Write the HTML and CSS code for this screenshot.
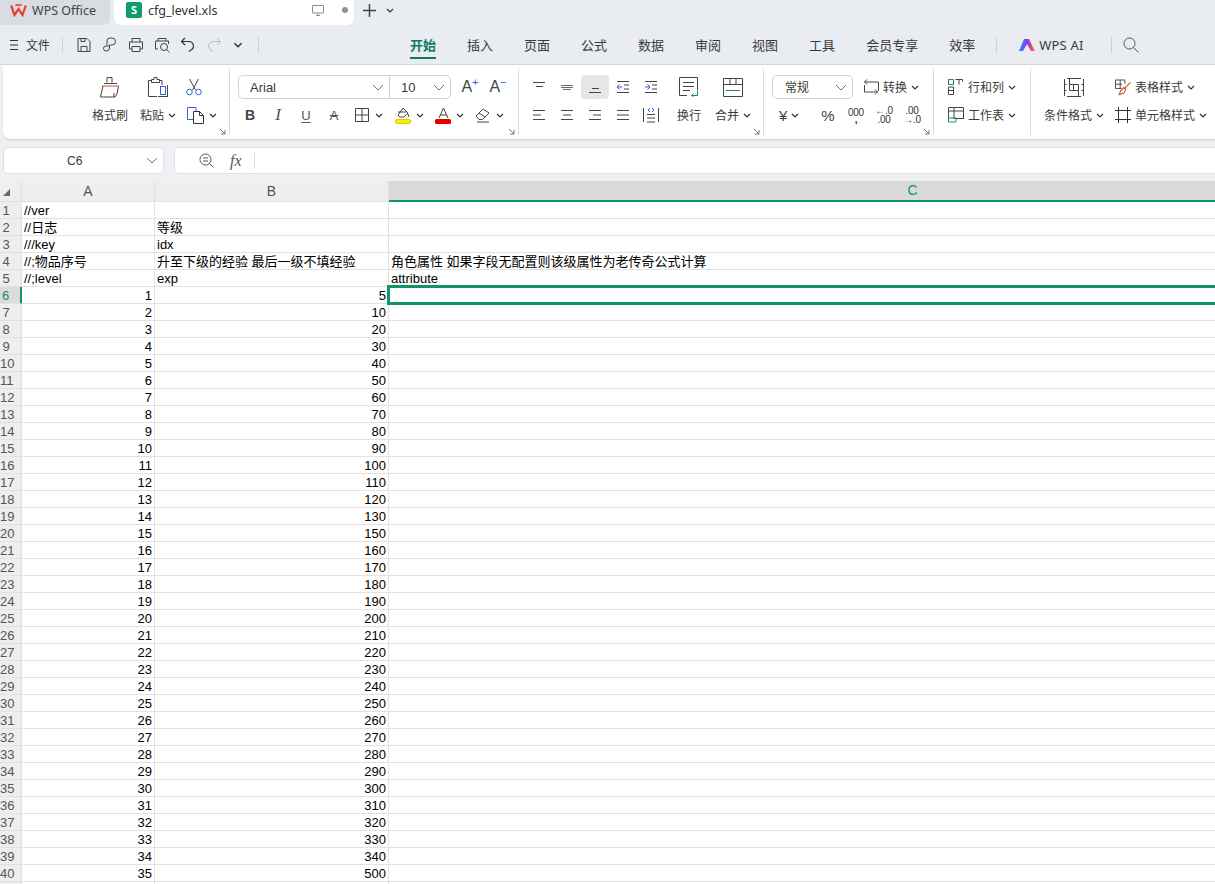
FILE: index.html
```html
<!DOCTYPE html>
<html lang="en">
<head>
    <meta charset="utf-8">
    <title>cfg_level.xls - WPS Office</title>
    <link rel="stylesheet" href="styles.css">
</head>
<body>
    <svg class="defs" width="0" height="0">
        <symbol id="chev" viewBox="0 0 8 5"><path d="M1 1l3 3 3-3" fill="none" stroke="#333" stroke-width="1.2"/></symbol>
        <symbol id="chevbig" viewBox="0 0 12 7"><path d="M1 1l5 5 5-5" fill="none" stroke="#777" stroke-width="1"/></symbol>
        <symbol id="launch" viewBox="0 0 7 7"><path d="M1 1l5 5M6 2v4H2" fill="none" stroke="#777" stroke-width="1"/></symbol>
    </svg>

    <!-- title bar -->
    <div class="tabbar">
        <div class="apptab">
            <svg width="17" height="13" viewBox="0 0 17 13"><path d="M1.200 1.500l3.300 9.500 4-6 4 6 3.300-9.500" fill="none" stroke="#ea3a2c" stroke-width="2.200"/><path d="M5.500 1h6" stroke="#ea3a2c" stroke-width="1.600"/></svg>
            <span>WPS Office</span>
        </div>
        <div class="filetab">
            <span class="sheeticon">S</span>
            <span class="filename">cfg_level.xls</span>
            <svg class="monitor" width="14" height="13" viewBox="0 0 14 13"><path d="M1.500 1.500h11v7.500h-11zM5 11.500h4M7 9v2.500" fill="none" stroke="#8b8f94"/></svg>
            <span class="dot"></span>
        </div>
        <svg class="plus" width="15" height="15" viewBox="0 0 15 15"><path d="M7.500 1v13M1 7.500h13" stroke="#444" stroke-width="1.500"/></svg>
        <svg class="tabchev" width="8" height="5"><use href="#chev"/></svg>
    </div>

    <!-- quick access + menu -->
    <div class="menubar">
        <div class="quick">
            <svg class="hamb" width="8" height="10" viewBox="0 0 8 10"><path d="M0 .500h8M0 5h8M0 9.500h8" stroke="#333"/></svg>
            <span class="filemenu">文件</span>
            <span class="qsep"></span>
            <svg class="q" width="16" height="16" viewBox="0 0 16 16"><path d="M2 1.500h9l3 3v10H2zM5 14.500v-5h6v5M5 1.500v3h4v-3" fill="none" stroke="#444"/></svg>
            <svg class="q" width="16" height="16" viewBox="0 0 16 16"><path d="M5 8V4a3 3 0 0 1 3-3h2a3 3 0 0 1 0 7H7.500v3a3 3 0 0 1-3 3H4a2.500 2.500 0 0 1 0-5h3" fill="none" stroke="#444"/></svg>
            <svg class="q" width="16" height="16" viewBox="0 0 16 16"><path d="M4 5V1.500h8V5M4 12H1.500V5h13v7H12M4 9.500h8v5H4z" fill="none" stroke="#444"/></svg>
            <svg class="q" width="16" height="16" viewBox="0 0 16 16"><path d="M4 4V1.500h8V4M4 12H1.500V4h13v3M6 12h0" fill="none" stroke="#444"/><circle cx="10" cy="10" r="3.500" fill="#e9ecf0" stroke="#444"/><path d="M12.500 12.500l3 3" stroke="#444"/></svg>
            <svg class="q" width="16" height="16" viewBox="0 0 16 16"><path d="M5 1L1.500 4.500 5 8M2 4.500h7a4.500 4.500 0 0 1 2 8.500l-2 1.500" fill="none" stroke="#333" stroke-width="1.200"/></svg>
            <svg class="q" width="16" height="16" viewBox="0 0 16 16"><path d="M11 1l3.500 3.500L11 8M14 4.500H7a4.500 4.500 0 0 0-2 8.500l2 1.500" fill="none" stroke="#bbb"/></svg>
            <svg class="q qchev" width="10" height="6"><use href="#chev"/></svg>
            <span class="qsep qsep-end"></span>
        </div>
        <nav class="menus">
            <span class="menu active">开始</span>
            <span class="menu">插入</span>
            <span class="menu">页面</span>
            <span class="menu">公式</span>
            <span class="menu">数据</span>
            <span class="menu">审阅</span>
            <span class="menu">视图</span>
            <span class="menu">工具</span>
            <span class="menu">会员专享</span>
            <span class="menu">效率</span>
        </nav>
        <span class="msep msep-ai"></span>
        <svg class="ailogo" width="16" height="12" viewBox="0 0 16 12">
            <defs><linearGradient id="aig" x1="0" x2="1" y1="0" y2="0"><stop offset="0" stop-color="#2f8cf6"/><stop offset=".5" stop-color="#7b3df0"/><stop offset=".8" stop-color="#f0457a"/><stop offset="1" stop-color="#f58a3c"/></linearGradient></defs>
            <path d="M5 0h5l6 12h-4L8 5l-4 7H0z" fill="url(#aig)"/>
        </svg>
        <span class="aitext">WPS AI</span>
        <span class="msep msep-search"></span>
        <svg class="search" width="16" height="16" viewBox="0 0 16 16"><circle cx="6.500" cy="6.500" r="5.500" fill="none" stroke="#555"/><path d="M10.500 10.500l5 5" stroke="#555"/></svg>
    </div>

    <!-- ribbon -->
    <div class="ribbon">
        <div class="group g-clip">
            <div class="col col-painter">
                <div class="cell"><svg width="22" height="22" viewBox="0 0 22 22"><path d="M8 6.500V1.500h5v5M5 7.500h13M4 10l-2.500 11h14.500l2-3 1.500-8M15 21v-4" fill="none" stroke="#444"/><path d="M3 10h17" stroke="#c8572b"/></svg></div>
                <div class="cell label">格式刷</div>
            </div>
            <div class="col col-paste">
                <div class="cell"><svg width="22" height="22" viewBox="0 0 22 22"><path d="M4 4.500H1.500v16H10M15 9V4.500h-2.500M4.500 6.500v-3h2.500V1.500h3v2h2.500v3z" fill="none" stroke="#444"/><rect x="13.500" y="10.500" width="5" height="8" fill="#fff" stroke="#2f62d9"/><path d="M11 20.500h10M20.500 9v11.500" stroke="#444"/></svg></div>
                <div class="cell label">粘贴<svg class="dd" width="8" height="5"><use href="#chev"/></svg></div>
            </div>
            <div class="col col-cut">
                <div class="cell cut"><svg width="16" height="18" viewBox="0 0 16 18"><path d="M3.500 1l6 11M12.500 1l-6 11" fill="none" stroke="#444"/><circle cx="3.500" cy="14" r="2.800" fill="none" stroke="#2f62d9"/><circle cx="12.500" cy="14" r="2.800" fill="none" stroke="#2f62d9"/></svg></div>
                <div class="cell cut-under"><svg width="18" height="17" viewBox="0 0 18 17"><path d="M6 12.500H.500V.500H9V4" fill="none" stroke="#2f62d9"/><path d="M6.500 4.500h6l4 4v8h-10zM12.500 4.500v4h4" fill="#fff" stroke="#333"/></svg><svg class="dd" width="8" height="5"><use href="#chev"/></svg></div>
            </div>
            <svg class="launcher" width="7" height="7"><use href="#launch"/></svg>
        </div>

        <div class="group g-font">
            <div class="row">
                <div class="select font-name"><span>Arial</span><svg width="12" height="7"><use href="#chevbig"/></svg></div>
                <div class="select font-size"><span>10</span><svg width="12" height="7"><use href="#chevbig"/></svg></div>
                <div class="tool grow">A<sup class="mark">+</sup></div>
                <div class="tool grow">A<sup class="mark minus">−</sup></div>
            </div>
            <div class="row">
                <div class="tool fmt bold">B</div>
                <div class="tool fmt ital">I</div>
                <div class="tool fmt under">U</div>
                <div class="tool fmt strike">A</div>
                <div class="tooldd"><svg width="14" height="14" viewBox="0 0 14 14"><path d="M.500.500h13v13H.500zM7 .500v13M.500 7h13" fill="none" stroke="#444"/></svg><svg class="dd dd-after-grid" width="8" height="5"><use href="#chev"/></svg></div>
                <div class="tooldd"><svg width="17" height="17" viewBox="0 0 17 17"><path d="M8 1l5 5-4 4H5L3 8zM3 5h8" fill="none" stroke="#444"/><path d="M13 7l1 3" stroke="#444"/><rect x=".500" y="12.500" width="15" height="4" rx="1.500" fill="#f5f000" stroke="#d6cf00"/></svg><svg class="dd" width="8" height="5"><use href="#chev"/></svg></div>
                <div class="tooldd"><svg width="17" height="17" viewBox="0 0 17 17"><path d="M4 11L8.500 1 13 11M5.500 8h6" fill="none" stroke="#444"/><rect x="0" y="12" width="16" height="5" rx="1.500" fill="#e00000"/></svg><svg class="dd" width="8" height="5"><use href="#chev"/></svg></div>
                <div class="tooldd"><svg width="17" height="15" viewBox="0 0 17 15"><path d="M1 8l7-7 6 4-6.500 6.500H4zM4 5l6 4M2 14h12" fill="none" stroke="#444"/></svg><svg class="dd" width="8" height="5"><use href="#chev"/></svg></div>
            </div>
            <svg class="launcher" width="7" height="7"><use href="#launch"/></svg>
        </div>

        <div class="group g-align">
            <div class="aligns">
                <div class="tool"><svg width="14" height="14" viewBox="0 0 14 14"><path d="M1 2.500h12M4 6.500h7" stroke="#444"/></svg></div>
                <div class="tool"><svg width="14" height="14" viewBox="0 0 14 14"><path d="M1 5.500h12M3 9.500h8M1 7.500h12" stroke="#444" stroke-width=".8"/></svg></div>
                <div class="tool on"><svg width="14" height="14" viewBox="0 0 14 14"><path d="M4 8.500h7M1 12.500h12" stroke="#444"/></svg></div>
                <div class="tool"><svg width="14" height="14" viewBox="0 0 14 14"><path d="M1 7h5M3.500 4.500L1 7l2.500 2.500" fill="none" stroke="#2f62d9"/><path d="M1 1.500h12M1 12.500h12M8 5h5M8 9h5" stroke="#444"/></svg></div>
                <div class="tool"><svg width="14" height="14" viewBox="0 0 14 14"><path d="M1 7h5M3.500 4.500L6 7 3.500 9.500" fill="none" stroke="#2f62d9"/><path d="M1 1.500h12M1 12.500h12M8 5h5M8 9h5" stroke="#444"/></svg></div>
                <div class="tool"><svg width="14" height="14" viewBox="0 0 14 14"><path d="M1 2.500h12M1 7h8M1 11.500h12" stroke="#444"/></svg></div>
                <div class="tool"><svg width="14" height="14" viewBox="0 0 14 14"><path d="M1 2.500h12M3 7h8M1 11.500h12" stroke="#444"/></svg></div>
                <div class="tool"><svg width="14" height="14" viewBox="0 0 14 14"><path d="M1 2.500h12M5 7h8M1 11.500h12" stroke="#444"/></svg></div>
                <div class="tool"><svg width="14" height="14" viewBox="0 0 14 14"><path d="M1 2.500h12M1 7h12M1 11.500h12" stroke="#444"/></svg></div>
                <div class="tool"><svg width="16" height="16" viewBox="0 0 16 16"><path d="M.500 1v14M15.500 1v14M4 7.500h8M4 11h8M4 15h8" stroke="#444" fill="none"/><path d="M7 1L5 3l2 2M9 1l2 2-2 2" stroke="#2f62d9" fill="none"/></svg></div>
            </div>
            <div class="col col-wrap">
                <div class="cell"><svg width="20" height="20" viewBox="0 0 20 20"><path d="M8 18.500H.500V.500h18v13M4 5.500h11M4 9.500h11M4 13.500h7" fill="none" stroke="#444"/><path d="M18.500 14v4.500h-6M14.500 16.500l-2 2 2 1.500" fill="none" stroke="#1f8a5b"/></svg></div>
                <div class="cell label">换行</div>
            </div>
            <div class="col col-merge">
                <div class="cell"><svg width="20" height="19" viewBox="0 0 20 19"><path d="M.500.500h19v18H.500zM.500 6.500h19M7 .500v6M13 .500v6" fill="none" stroke="#444"/><path d="M3 12.500h14" stroke="#1f8a5b"/></svg></div>
                <div class="cell label">合并<svg class="dd" width="8" height="5"><use href="#chev"/></svg></div>
            </div>
            <svg class="launcher" width="7" height="7"><use href="#launch"/></svg>
        </div>

        <div class="group g-num">
            <div class="row">
                <div class="select num-format"><span>常规</span><svg width="12" height="7"><use href="#chevbig"/></svg></div>
                <div class="btnline convert"><svg width="16" height="16" viewBox="0 0 16 16"><path d="M1.500 3h14v9M1.500 6v7h13M4 .500L1.500 3 4 5.500M12 10.500l2.500 2.500-2.500 2.500" fill="none" stroke="#444"/></svg><span>转换</span><svg class="dd" width="8" height="5"><use href="#chev"/></svg></div>
            </div>
            <div class="row">
                <div class="tooldd yuan"><span>¥</span><svg class="dd" width="8" height="5"><use href="#chev"/></svg></div>
                <div class="tool pct">%</div>
                <div class="tool stack"><span class="sm">000</span><span class="sm comma">,</span></div>
                <div class="tool stack"><span class="sm">←.0</span><span class="sm">.00</span></div>
                <div class="tool stack"><span class="sm">.00</span><span class="sm">→.0</span></div>
            </div>
            <svg class="launcher" width="7" height="7"><use href="#launch"/></svg>
        </div>

        <div class="group g-rows">
            <div class="row btnline"><svg width="16" height="16" viewBox="0 0 16 16"><path d="M.500.500h5v5h-5z" fill="none" stroke="#1f8a5b"/><path d="M7.500.500h7v2M11 .500v5M.500 8v7.500h5V8zM.500 11.500h5" fill="none" stroke="#444"/></svg><span>行和列</span><svg class="dd" width="8" height="5"><use href="#chev"/></svg></div>
            <div class="row btnline"><svg width="16" height="16" viewBox="0 0 16 16"><path d="M.500 11V.500h15V12M.500 4h15M6 .500V12M6 11.500h9" fill="none" stroke="#444"/><path d="M.500 11v4h7l1-4z" fill="none" stroke="#1f8a5b"/></svg><span>工作表</span><svg class="dd" width="8" height="5"><use href="#chev"/></svg></div>
        </div>

        <div class="group g-style">
            <div class="col col-cond">
                <div class="cell"><svg width="20" height="19" viewBox="0 0 20 19"><path d="M.500 1v17M19.500 1v17M3 .500h14M3 18.500h14M.500 6.500h2M.500 12.500h2M17.500 6.500h2M17.500 12.500h2M5.500 6.500h9v6h-9zM5.500 .500v6M9.500 6.500v6M14.500 12.500v6" fill="none" stroke="#444"/></svg></div>
                <div class="cell label">条件格式<svg class="dd" width="8" height="5"><use href="#chev"/></svg></div>
            </div>
            <div class="stylebtns">
                <div class="row btnline"><svg width="16" height="17" viewBox="0 0 17 17"><path d="M7 9.500H.500v-9h10v4M.500 5h7M5.500.500v9" fill="none" stroke="#444"/><path d="M16.500 3l-7 7M9.500 8.500l2 2-2 4-5 1.500 1.500-4z" fill="none" stroke="#c8572b" stroke-width="1.200"/></svg><span>表格样式</span><svg class="dd" width="8" height="5"><use href="#chev"/></svg></div>
                <div class="row btnline"><svg width="16" height="16" viewBox="0 0 16 16"><path d="M0 3.500h16M0 12.500h16M3.500 0v16M12.500 0v16" fill="none" stroke="#333"/></svg><span>单元格样式</span><svg class="dd" width="8" height="5"><use href="#chev"/></svg></div>
            </div>
        </div>
    </div>

    <!-- formula bar -->
    <div class="formulabar">
        <div class="namebox"><span>C6</span><svg width="12" height="7"><use href="#chevbig"/></svg></div>
        <div class="fxbox">
            <svg width="15" height="15" viewBox="0 0 15 15"><circle cx="6.500" cy="6.500" r="5.500" fill="none" stroke="#555"/><path d="M10.500 10.500l4 4M4 5h5M4 8h5" stroke="#555"/></svg>
            <span class="fx">fx</span>
            <span class="fxsep"></span>
        </div>
    </div>

    <!-- sheet -->
    <div class="sheetwrap">
    <table class="sheet">
        <colgroup><col class="c-head"><col class="c-a"><col class="c-b"><col class="c-c"></colgroup>
        <thead>
            <tr>
                <th class="corner"><span class="tri"></span></th>
                <th class="colhead">A</th>
                <th class="colhead">B</th>
                <th class="colhead selected">C</th>
            </tr>
        </thead>
        <tbody>
            <tr><th>1</th><td>//ver</td><td></td><td></td></tr>
            <tr><th>2</th><td>//日志</td><td>等级</td><td></td></tr>
            <tr><th>3</th><td>///key</td><td>idx</td><td></td></tr>
            <tr><th>4</th><td>//;物品序号</td><td>升至下级的经验 最后一级不填经验</td><td>角色属性 如果字段无配置则该级属性为老传奇公式计算</td></tr>
            <tr><th>5</th><td>//;level</td><td>exp</td><td>attribute</td></tr>
            <tr><th class="current">6</th><td class="num">1</td><td class="num">5</td><td class="active"></td></tr>
            <tr><th>7</th><td class="num">2</td><td class="num">10</td><td></td></tr>
            <tr><th>8</th><td class="num">3</td><td class="num">20</td><td></td></tr>
            <tr><th>9</th><td class="num">4</td><td class="num">30</td><td></td></tr>
            <tr><th>10</th><td class="num">5</td><td class="num">40</td><td></td></tr>
            <tr><th>11</th><td class="num">6</td><td class="num">50</td><td></td></tr>
            <tr><th>12</th><td class="num">7</td><td class="num">60</td><td></td></tr>
            <tr><th>13</th><td class="num">8</td><td class="num">70</td><td></td></tr>
            <tr><th>14</th><td class="num">9</td><td class="num">80</td><td></td></tr>
            <tr><th>15</th><td class="num">10</td><td class="num">90</td><td></td></tr>
            <tr><th>16</th><td class="num">11</td><td class="num">100</td><td></td></tr>
            <tr><th>17</th><td class="num">12</td><td class="num">110</td><td></td></tr>
            <tr><th>18</th><td class="num">13</td><td class="num">120</td><td></td></tr>
            <tr><th>19</th><td class="num">14</td><td class="num">130</td><td></td></tr>
            <tr><th>20</th><td class="num">15</td><td class="num">150</td><td></td></tr>
            <tr><th>21</th><td class="num">16</td><td class="num">160</td><td></td></tr>
            <tr><th>22</th><td class="num">17</td><td class="num">170</td><td></td></tr>
            <tr><th>23</th><td class="num">18</td><td class="num">180</td><td></td></tr>
            <tr><th>24</th><td class="num">19</td><td class="num">190</td><td></td></tr>
            <tr><th>25</th><td class="num">20</td><td class="num">200</td><td></td></tr>
            <tr><th>26</th><td class="num">21</td><td class="num">210</td><td></td></tr>
            <tr><th>27</th><td class="num">22</td><td class="num">220</td><td></td></tr>
            <tr><th>28</th><td class="num">23</td><td class="num">230</td><td></td></tr>
            <tr><th>29</th><td class="num">24</td><td class="num">240</td><td></td></tr>
            <tr><th>30</th><td class="num">25</td><td class="num">250</td><td></td></tr>
            <tr><th>31</th><td class="num">26</td><td class="num">260</td><td></td></tr>
            <tr><th>32</th><td class="num">27</td><td class="num">270</td><td></td></tr>
            <tr><th>33</th><td class="num">28</td><td class="num">280</td><td></td></tr>
            <tr><th>34</th><td class="num">29</td><td class="num">290</td><td></td></tr>
            <tr><th>35</th><td class="num">30</td><td class="num">300</td><td></td></tr>
            <tr><th>36</th><td class="num">31</td><td class="num">310</td><td></td></tr>
            <tr><th>37</th><td class="num">32</td><td class="num">320</td><td></td></tr>
            <tr><th>38</th><td class="num">33</td><td class="num">330</td><td></td></tr>
            <tr><th>39</th><td class="num">34</td><td class="num">340</td><td></td></tr>
            <tr><th>40</th><td class="num">35</td><td class="num">500</td><td></td></tr>
            <tr><th></th><td></td><td></td><td></td></tr>
        </tbody>
    </table>
    </div>
</body>
</html>
```

FILE: styles.css
```css
* {
    box-sizing: border-box;
}

html, body {
    height: 884px;
    overflow: hidden;
}

body {
    margin: 0;
    background: #eef0f3;
    font-family: "Noto Sans", "Noto Sans CJK SC", sans-serif;
    font-size: 12px;
    color: #3a3a3a;
}

svg {
    display: block;
    flex: none;
}

.defs {
    position: absolute;
}

/* title bar */
.tabbar {
    height: 25px;
    display: flex;
    align-items: center;
    background: #e9ecf0;
}

.apptab {
    width: 110px;
    height: 25px;
    display: flex;
    align-items: center;
    gap: 5px;
    padding: 0 0 5px 10px;
    background: #d9dde2;
    border-bottom-right-radius: 6px;
    font-size: 12.5px;
    color: #444;
}

.filetab {
    width: 240px;
    height: 25px;
    margin-left: 4px;
    display: flex;
    align-items: center;
    padding: 0 0 5px 12px;
    background: #fff;
    border-radius: 0 0 7px 7px;
    font-size: 12.5px;
    color: #333;
}

.sheeticon {
    width: 16px;
    height: 16px;
    border-radius: 2px;
    background: #0f9d6c;
    color: #fff;
    font-size: 11px;
    font-weight: 700;
    line-height: 16px;
    text-align: center;
}

.filename {
    margin-left: 6px;
    width: 163px;
}

.dot {
    width: 6px;
    height: 6px;
    margin-left: 17px;
    border-radius: 50%;
    background: #8d9094;
}

.plus {
    margin: 0 0 5px 8px;
}

.tabchev {
    margin: 0 0 5px 9px;
}

/* menu row */
.menubar {
    height: 40px;
    display: flex;
    align-items: center;
    background: #e9ecf0;
    border-bottom: 1px solid #d2d4d8;
}

.quick {
    width: 410px;
    display: flex;
    align-items: center;
    padding-left: 10px;
}

.filemenu {
    margin-left: 8px;
}

.qsep {
    width: 1px;
    height: 16px;
    margin-left: 12px;
    background: #cfd2d6;
}

.q {
    margin-left: 10px;
}

.qsep + .q {
    margin-left: 13px;
}

.qchev {
    margin-left: 11px;
}

.qsep-end {
    margin-left: 15px;
}

.menus {
    display: flex;
    gap: 31px;
}

.menu {
    font-size: 13px;
    line-height: 24px;
    color: #3a3a3a;
}

.menu.active {
    color: #0d7a66;
    font-weight: 700;
    box-shadow: 0 2px 0 #0d7a66;
}

.msep {
    width: 1px;
    height: 16px;
    background: #cfd2d6;
}

.msep-ai {
    margin-left: 21px;
}

.ailogo {
    margin-left: 22px;
}

.aitext {
    margin-left: 4px;
    font-size: 13px;
    letter-spacing: .2px;
}

.msep-search {
    margin-left: 27px;
}

.search {
    margin-left: 11px;
}

/* ribbon */
.ribbon {
    height: 75px;
    margin-left: 3px;
    display: flex;
    align-items: flex-start;
    padding-top: 4px;
    background: #fff;
    border-bottom: 1px solid #d2d4d8;
    border-radius: 0 0 0 8px;
    box-shadow: 0 1px 1px #e2e4e8;
}

.group {
    position: relative;
    height: 66px;
    padding-top: 6px;
    display: flex;
    border-right: 1px solid #d9dbde;
    flex: none;
}

.col {
    display: grid;
    grid-template-rows: 24px 24px;
    row-gap: 4px;
}

.cell {
    display: flex;
    align-items: center;
    justify-content: center;
}

.label {
    font-size: 12px;
    white-space: nowrap;
}

.dd {
    margin-left: 4px;
}

.launcher {
    position: absolute;
    right: 3px;
    bottom: 0;
}

.g-clip {
    width: 227px;
    padding-left: 88px;
}

.col-painter {
    width: 38px;
}

.col-paste {
    width: 38px;
    margin-left: 10px;
}

.col-cut {
    width: 36px;
    margin-left: 10px;
}

.cut,
.cut-under {
    justify-content: flex-start;
}

.cut svg {
    margin-left: -1px;
}

.g-font {
    width: 289px;
    padding-left: 6px;
    flex-direction: column;
    gap: 4px;
}

.g-num {
    width: 170px;
    padding-left: 8px;
    flex-direction: column;
    gap: 4px;
}

.row {
    height: 24px;
    display: flex;
    align-items: center;
}

.select {
    height: 24px;
    display: flex;
    align-items: center;
    justify-content: space-between;
    padding: 0 5px 0 11px;
    border: 1px solid #cfd1d4;
    background: #fff;
    font-size: 13px;
    color: #3a3a3a;
}

.font-name {
    width: 152px;
    margin-left: 2px;
    border-radius: 5px 0 0 5px;
    font-family: "Liberation Sans", sans-serif;
}

.font-size {
    width: 62px;
    margin-left: -1px;
    border-radius: 0 5px 5px 0;
    font-family: "Liberation Sans", sans-serif;
}

.tool {
    width: 28px;
    height: 24px;
    display: flex;
    align-items: center;
    justify-content: center;
    flex: none;
    border-radius: 4px;
}

.tool.on {
    background: #e6e6e6;
}

.grow {
    font-family: "Liberation Sans", sans-serif;
    font-size: 16px;
    color: #444;
}

.font-size + .grow {
    margin-left: 5px;
}

.mark {
    font-size: 11px;
    line-height: 8px;
    color: #2f62d9;
    align-self: flex-start;
    margin-top: 3px;
}

.fmt {
    font-family: "Liberation Sans", sans-serif;
    font-size: 14px;
    color: #444;
}

.bold {
    font-weight: 700;
}

.ital {
    font-family: "Liberation Serif", serif;
    font-style: italic;
    font-size: 17px;
    color: #555;
}

.under {
    text-decoration: underline;
    text-underline-offset: 2px;
    font-size: 13px;
    color: #555;
}

.strike {
    text-decoration: line-through;
    font-size: 13px;
    color: #555;
}

.tooldd {
    width: 40px;
    height: 24px;
    display: flex;
    align-items: center;
    padding-left: 7px;
    flex: none;
}

.dd-after-grid {
    margin-left: 6px;
}

.g-align {
    width: 245px;
    padding-left: 6px;
}

.aligns {
    display: grid;
    grid-template-columns: repeat(5, 28px);
    grid-template-rows: 24px 24px;
    row-gap: 4px;
}

.col-wrap {
    width: 38px;
    margin-left: 5px;
}

.col-merge {
    width: 40px;
    margin-left: 5px;
}

.num-format {
    width: 81px;
    border-radius: 5px;
    padding-left: 12px;
    font-size: 12px;
}

.btnline {
    display: flex;
    align-items: center;
    white-space: nowrap;
}

.btnline span {
    margin-left: 4px;
}

.convert {
    margin-left: 10px;
}

.yuan {
    width: 42px;
    font-family: "Liberation Sans", sans-serif;
    font-size: 15px;
    color: #444;
}

.pct {
    font-family: "Liberation Sans", sans-serif;
    font-size: 15px;
    color: #444;
}

.stack {
    flex-direction: column;
    font-family: "Liberation Sans", sans-serif;
    line-height: 9px;
}

.sm {
    font-size: 10px;
    letter-spacing: -.3px;
    color: #333;
}

.comma {
    font-weight: 700;
    line-height: 6px;
}

.g-rows {
    width: 97px;
    padding-left: 14px;
    flex-direction: column;
    gap: 4px;
}

.g-style {
    border-right: 0;
    padding-left: 10px;
    width: 184px;
    overflow: hidden;
}

.col-cond {
    width: 66px;
}

.stylebtns {
    margin-left: 8px;
    display: flex;
    flex-direction: column;
    gap: 4px;
}

/* formula bar */
.formulabar {
    height: 41px;
    display: flex;
    padding: 7px 0 0 3px;
}

.namebox {
    width: 161px;
    height: 27px;
    display: flex;
    align-items: center;
    justify-content: space-between;
    padding: 0 5px 0 63px;
    background: #fff;
    border: 1px solid #dcdfe3;
    border-radius: 5px;
    font-family: "Liberation Sans", sans-serif;
    font-size: 12px;
}

.fxbox {
    flex: 1;
    height: 27px;
    margin-left: 10px;
    display: flex;
    align-items: center;
    padding-left: 24px;
    background: #fff;
    border: 1px solid #dcdfe3;
    border-right: 0;
    border-radius: 5px 0 0 5px;
}

.fx {
    margin-left: 16px;
    font-family: "Liberation Serif", serif;
    font-style: italic;
    font-size: 16px;
    color: #555;
}

.fxsep {
    width: 1px;
    height: 16px;
    margin-left: 12px;
    background: #d9dbde;
}

/* sheet */
.sheetwrap {
    width: 1215px;
    height: 703px;
    overflow: hidden;
}

.sheet {
    width: 1437px;
    table-layout: fixed;
    border-collapse: separate;
    border-spacing: 0;
    background: #fff;
    font-family: "Liberation Sans", "Noto Sans CJK SC", sans-serif;
    font-size: 13px;
    color: #000;
}

.c-head {
    width: 22px;
}

.c-a {
    width: 133px;
}

.c-b {
    width: 234px;
}

.c-c {
    width: 1048px;
}

.sheet th {
    height: 17px;
    padding: 2px 9px 0 0;
    background: #eeeeee;
    border-right: 1px solid #e0e0e0;
    border-bottom: 1px solid #e2e2e2;
    color: #555;
    font-weight: 400;
    font-size: 13px;
    line-height: 14px;
    text-align: center;
    white-space: nowrap;
}

.sheet td {
    height: 17px;
    padding: 2px 2px 0;
    border-right: 1px solid #e2e2e2;
    border-bottom: 1px solid #e2e2e2;
    line-height: 14px;
    white-space: nowrap;
    overflow: hidden;
}

.sheet td.num {
    text-align: right;
}

.sheet thead th {
    height: 21px;
    padding: 0 0 1px;
    font-size: 14px;
}

.corner {
    position: relative;
}

.tri {
    position: absolute;
    left: 3px;
    bottom: 5px;
    border-left: 7px solid transparent;
    border-bottom: 7px solid #666;
}

.sheet .colhead.selected {
    background: #d9d9d9;
    color: #0f8f68;
    border-bottom: 2px solid #12946b;
}

.sheet th.current {
    background: #dcdcdc;
    color: #0f8f68;
    border-right: 2px solid #12946b;
}

.sheet td.active {
    position: relative;
    overflow: visible;
}

.sheet td.active::after {
    content: "";
    position: absolute;
    left: -2px;
    top: -2px;
    right: -3px;
    bottom: -2px;
    border: 3px solid #12946b;
}
```
